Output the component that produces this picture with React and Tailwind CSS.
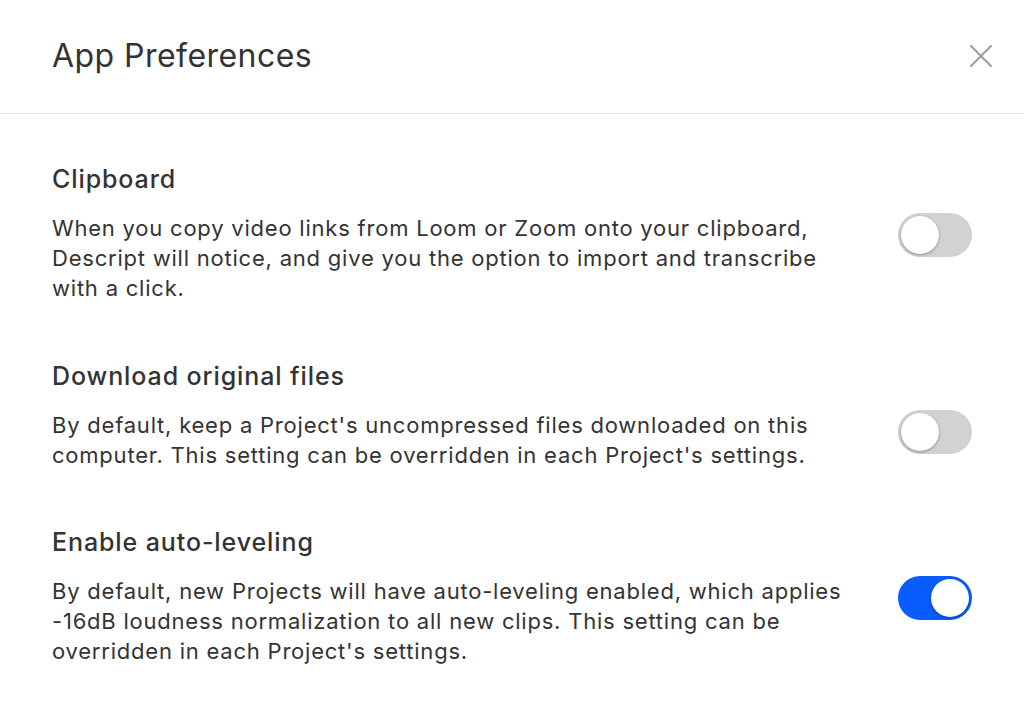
import React from "react";

function Toggle({ on }) {
  return (
    <div
      className={`relative shrink-0 w-[74px] h-[44px] rounded-full ${on ? "bg-[#0a5cff]" : "bg-[#d2d2d2]"}`}
    >
      <div
        className={`absolute top-[3px] w-[38px] h-[38px] rounded-full bg-white shadow-[0_1px_3px_rgba(0,0,0,0.35)] ${on ? "right-[3px]" : "left-[3px]"}`}
      />
    </div>
  );
}

function Section({ title, lines, on, className = "" }) {
  return (
    <div className={className}>
      <h2 className="text-[25px] leading-[30px] font-medium tracking-[0.9px] text-[#333]">{title}</h2>
      <div className="mt-[19px] flex items-start justify-between">
        <p className="text-[22px] leading-[30px] tracking-[0.78px] text-[#333]">
          {lines.map((l, i) => (
            <React.Fragment key={i}>
              {l}
              {i < lines.length - 1 && <br />}
            </React.Fragment>
          ))}
        </p>
        <Toggle on={on} />
      </div>
    </div>
  );
}

export default function App() {
  return (
    <div
      className="w-[1024px] h-[702px] bg-white overflow-hidden"
      style={{ fontFamily: "Inter, 'Liberation Sans', sans-serif" }}
    >
      <div className="h-[114px] border-b border-[#e3e3e3] flex items-center justify-between pl-[52px] pr-[31px]">
        <h1 className="text-[32px] leading-[40px] tracking-[0.45px] text-[#333] -mt-[2px]">App Preferences</h1>
        <svg width="24" height="24" viewBox="0 0 24 24" className="text-[#a0a0a0] -mt-[2px]">
          <path d="M2 2L22 22M22 2L2 22" stroke="currentColor" strokeWidth="2.2" strokeLinecap="round" />
        </svg>
      </div>
      <div className="px-[52px] pt-[50px]">
        <Section
          title="Clipboard"
          on={false}
          lines={[
            "When you copy video links from Loom or Zoom onto your clipboard,",
            "Descript will notice, and give you the option to import and transcribe",
            "with a click.",
          ]}
        />
        <Section
          className="mt-[58px]"
          title="Download original files"
          on={false}
          lines={[
            "By default, keep a Project's uncompressed files downloaded on this",
            "computer. This setting can be overridden in each Project's settings.",
          ]}
        />
        <Section
          className="mt-[57px]"
          title="Enable auto-leveling"
          on={true}
          lines={[
            "By default, new Projects will have auto-leveling enabled, which applies",
            "-16dB loudness normalization to all new clips. This setting can be",
            "overridden in each Project's settings.",
          ]}
        />
      </div>
    </div>
  );
}
